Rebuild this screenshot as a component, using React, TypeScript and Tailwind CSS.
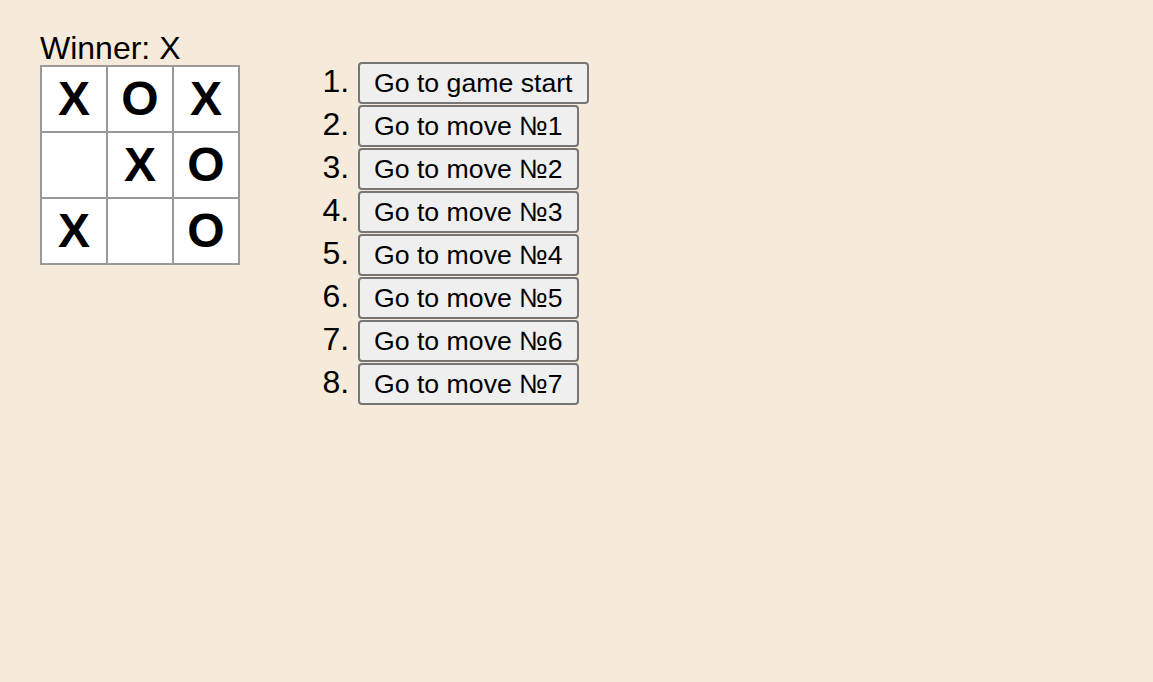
import React from "react";

const squares: (string | null)[] = ["X", "O", "X", null, "X", "O", "X", null, "O"];
const moves = [
  "Go to game start",
  "Go to move №1",
  "Go to move №2",
  "Go to move №3",
  "Go to move №4",
  "Go to move №5",
  "Go to move №6",
  "Go to move №7",
];

function Square({ value }: { value: string | null }) {
  return (
    <button className="w-[68px] h-[68px] -mr-[2px] -mt-[2px] border-2 border-[#999999] bg-white p-0 text-center text-[48px] font-bold leading-[64px] text-black">
      {value}
    </button>
  );
}

export default function App() {
  return (
    <div
      className="min-h-screen w-full bg-[#f6ebdb] pl-[40px] pt-[30px] text-black"
      style={{ fontFamily: '"Liberation Sans", Arial, sans-serif' }}
    >
      <div className="flex flex-row">
        <div>
          <div className="text-[32px] leading-[37px]">Winner: X</div>
          {[0, 1, 2].map((r) => (
            <div key={r} className="flex">
              {[0, 1, 2].map((c) => (
                <Square key={c} value={squares[r * 3 + c]} />
              ))}
            </div>
          ))}
        </div>
        <div className="ml-[40px]">
          <ol className="mt-[32px] list-decimal pl-[80px]">
            {moves.map((m) => (
              <li key={m} className="h-[43px] text-[32px] leading-[37px]">
                <button className="rounded-[4px] border-2 border-[#767676] bg-[#efefef] px-[14px] py-[3.5px] text-[26.67px] leading-[31px] text-black">
                  {m}
                </button>
              </li>
            ))}
          </ol>
        </div>
      </div>
    </div>
  );
}
